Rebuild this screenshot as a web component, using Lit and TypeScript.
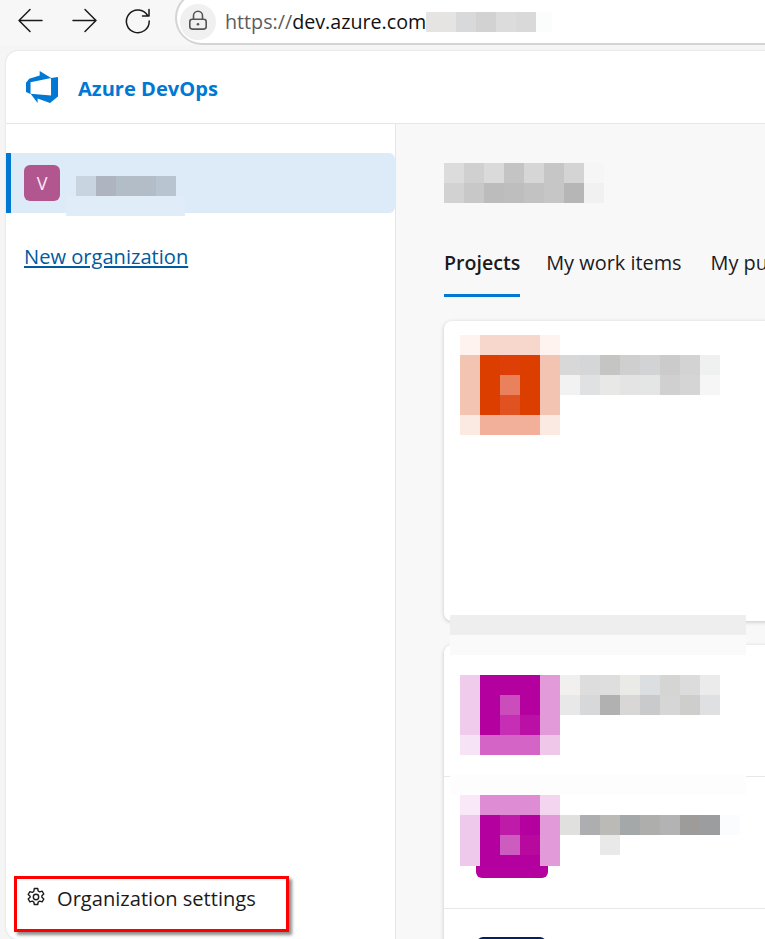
import { LitElement, html, css, svg } from "lit";
import { customElement } from "lit/decorators.js";

const tiles = (rows: string[][], cls = "", cols = "") => html`<div class="tiles ${cls}" style="grid-template-columns:${cols || `repeat(${rows[0].length},20px)`}">
  ${rows.flat().map((c) => html`<i style="background:#${c}"></i>`)}
</div>`;

const URL_T = [["e5e4e2","d8d9db","d2d2d2","dcdcdc","d9d9d9","fbfcfc"]];
const URL_COLS = "30px 20px 20px 20px 20px 16px";
const ORG_T = [["c8d4df","aeb5c0","b2bdc8","b2bdc8","b8c4cf"]];
const HEAD_T = [
  ["dcdcdc","d0d0d0","dadada","c4c4c4","d6d6d6","c6c6c6","d4d4d4","f6f6f6"],
  ["d2d2d2","c8c8c8","bcbcbc","bebebe","c2c2c2","c6c6c6","b6b6b6","f1f1f1"],
];
const ICON1 = [
  ["fff3ef","f7d7cc","f7d7cc","f7d7cc","fff3ef"],
  ["f4c4b2","dc3e00","dd3f06","dc3e00","f4c4b2"],
  ["f4c4b2","dc3e00","e9825c","dc3e00","f4c4b2"],
  ["f4c4b2","dc3e00","e0521f","dc3e00","f4c4b2"],
  ["faeae2","f2b09a","f2b09a","f2b09a","faeae2"],
];
const TEXT1 = [
  ["d8d8d8","d5d6d8","c5c5c3","cfcfcf","d2d3d5","cbcbcb","d3d3d3","eff0f0"],
  ["f2f2f2","dfe1e3","e8e8e6","e4e4e4","e4e6e5","d0d0d0","d5d5d5","f6f6f6"],
];
const ICON2 = [
  ["f0cbec","b4009e","b4009e","b4009e","e29ad9"],
  ["f0cbec","b4009e","cb4dbb","b4009e","e29ad9"],
  ["f0cbec","b4009e","c62fb5","ba10a6","e29ad9"],
  ["f6e3f5","d465c6","d465c6","d465c6","efc7e9"],
];
const TEXT2 = [
  ["f1f0ee","dddddd","dedede","eaeae6","dbdfe2","d5d5d3","dcdcdc","ebebeb"],
  ["e8e8e8","d7d8da","b1b1b1","d8d7d5","c8cacc","d6d6d6","cececc","dfe0e2"],
];
const ICON3 = [
  ["f8e8f8","de8cd4","de8cd4","de8cd4","f3d5ef"],
  ["efc9eb","b4009e","be1ba9","b4009e","e29ad9"],
  ["efc9eb","b4009e","cd5cc0","b8099f","e29ad9"],
  ["efc9eb","b4009e","b4009e","b4009e","e29ad9"],
];
const TEXT3 = [
  ["e0e0de","adaeb0","bbbab6","a5a8a9","aeaeac","b3b3b3","9e9c9a","9c9d9f","fbfcfe"],
  ["ffffff","ffffff","e9e9e9","ffffff","ffffff","ffffff","ffffff","ffffff","ffffff"],
];

const backIcon = svg`<path d="M42 20.5H19M30 9.5 19 20.5 30 31.5"/>`;
const fwdIcon = svg`<path d="M1 11.5H24M13 .5 24 11.5 13 22.5"/>`;

@customElement("app-root")
export class AppRoot extends LitElement {
  static styles = css`
    :host { display: block; width: 765px; height: 939px; overflow: hidden; background: #f5f5f5;
      font-family: "Open Sans", "Noto Sans", sans-serif; color: #1b1b1b; }
    .tiles { display: grid; grid-auto-rows: 20px; }
    .tiles i { display: block; }
    .tiles.short { grid-template-rows: 20px 20px 20px 11px; }

    .toolbar { height: 45px; display: flex; overflow: hidden; background: #f7f7f7; }
    .nav { flex: none; display: block; }
    .nav path { fill: none; stroke: #1a1a1a; stroke-width: 1.5; stroke-linecap: round; stroke-linejoin: round; }
    .pill { flex: none; width: 640px; height: 54px; margin: -9px 0 0 0; box-sizing: border-box; background: #fff;
      border: 2px solid #d4d4d4; border-radius: 27px 0 0 27px; display: flex; align-items: center; padding: 7px 0 0 3px; }
    .lock { flex: none; width: 36px; height: 36px; border-radius: 50%; background: #f0f0f0; display: flex; align-items: center; justify-content: center; }
    .url { margin-left: 9px; font-size: 19.7px; color: #111; white-space: nowrap; line-height: 24px; }
    .url span { color: #5c5c5c; }
    .pill .tiles { margin-top: 1px; }

    .window { margin: 6px -20px 0 6px; height: 888px; background: #fff; border-radius: 12px 0 0 12px;
      box-shadow: 0 0 2px rgba(0,0,0,.16); display: flex; flex-direction: column; }
    .brand { flex: none; height: 73px; box-sizing: border-box; border-bottom: 1px solid #e6e6e6; display: flex; align-items: center; padding-left: 18px; }
    .brand svg { display: block; }
    .brand b { margin: 2px 0 0 18px; font-size: 20.1px; font-weight: 700; color: #0078d4; }
    .body { flex: 1; display: flex; min-height: 0; }

    .side { flex: none; width: 390px; box-sizing: border-box; border-right: 1px solid #e6e6e6; padding-top: 29px; display: flex; flex-direction: column; position: relative; }
    .org { height: 60px; background: #ddebf8; border-left: 5px solid #0078d4; border-radius: 0 6px 6px 0; box-sizing: border-box;
      display: flex; align-items: flex-start; padding: 12px 0 0 13px; position: relative; }
    .avatar { width: 36px; height: 36px; border-radius: 6px; background: #b1568f; color: #fbe8f3; font-size: 18px; display: flex; align-items: center; justify-content: center; }
    .org .tiles { margin: 11px 0 0 16px; }
    .veil { position: absolute; left: 55px; top: 43px; width: 119px; height: 20px; background: #e0edf9; }
    .new { margin: 30px 0 0 18px; font-size: 20.1px; line-height: 28px; color: #005a9e; text-decoration: underline; align-self: flex-start; }
    .settings { margin: auto 0 7px 8px; width: 275px; height: 56px; box-sizing: border-box; border: 3px solid #f00; box-shadow: 3px 3px 3px rgba(0,0,0,.45);
      display: flex; align-items: flex-start; padding: 6px 0 0 10px; font-size: 20.1px; color: #1b1b1b; line-height: 28px; }
    .settings svg { flex: none; margin: 2px 11px 0 -1px; }

    .main { flex: 1; min-width: 0; background: #f8f8f8; padding: 39px 0 0 48px; position: relative; }
    .tabs { display: flex; margin-top: 44px; font-size: 19.9px; line-height: 32px; height: 50px; }
    .tab { white-space: nowrap; box-sizing: border-box; margin-right: 29px; }
    .tab.on { font-weight: 600; font-size: 19.6px; border-bottom: 3px solid #0078d4; color: #1b1b1b; margin-right: 26px; }
    .card { background: #fff; border-radius: 8px 0 0 8px; box-shadow: 0 1px 4px rgba(0,0,0,.2); }
    .c1 { margin-top: 24px; height: 300px; box-sizing: border-box; padding: 14px 0 0 16px; }
    .c2 { margin-top: 24px; }
    .row { display: flex; align-items: flex-start; padding-left: 16px; box-sizing: border-box; }
    .c1 .row { padding-left: 0; }
    .row + .row { border-top: 1px solid #e8e8e8; }
    .r1 { height: 131px; padding-top: 30px; }
    .r2 { height: 132px; padding-top: 18px; }
    .r3 { height: 60px; padding-top: 28px; }
    .text { margin-top: 20px; }
    .r1 .text { margin-top: 0; }
    .foot { width: 72px; height: 12px; margin-left: 16px; background: #b4009e; border-radius: 0 0 6px 6px; }
    .navy { width: 69px; height: 12px; margin-left: 17px; background: #05215c; border-radius: 6px 6px 0 0; }
    .blur { position: absolute; left: 54px; width: 296px; height: 20px; }
    .b1 { top: 491px; background: #eeeeee; }
    .b2 { top: 511px; background: #fafafa; }
    .b3 { top: 651px; background: #fdfdfd; }
  `;

  render() {
    return html`
      <div class="toolbar">
        <svg class="nav" width="175" height="45" viewBox="0 0 175 45">
          ${backIcon}
          <g transform="translate(72 9)">${fwdIcon}</g>
          <path d="M147.6 15.5A11.4 11.4 0 1 0 149.2 21M149 9.500V16H142.500"/>
        </svg>
        <div class="pill">
          <div class="lock">
            <svg width="22" height="26" viewBox="0 0 22 26">
              <path d="M6.500 10V6.800a4.500 4.500 0 0 1 9 0V10" fill="none" stroke="#555" stroke-width="1.6"/>
              <rect x="2.800" y="10.300" width="16.400" height="9.800" rx="2.500" fill="none" stroke="#555" stroke-width="1.600"/>
              <circle cx="11" cy="15.200" r="1.300" fill="#555"/>
            </svg>
          </div>
          <div class="url"><span>https://</span>dev.azure.com</div>
          ${tiles(URL_T, "", URL_COLS)}
        </div>
      </div>
      <div class="window">
        <div class="brand">
          <svg width="36" height="36" viewBox="0 0 18 18"><path fill="#0078d4" d="M17 4v9.740l-4 3.280-6.200-2.260V17l-3.510-4.590 10.230.8V4.440zm-3.410.49L7.850 1v2.290L2.580 4.840 1 6.870v4.610l2.260 1V6.570z"/></svg>
          <b>Azure DevOps</b>
        </div>
        <div class="body">
          <aside class="side">
            <div class="org">
              <div class="avatar">V</div>
              ${tiles(ORG_T)}
              <div class="veil"></div>
            </div>
            <a class="new">New organization</a>
            <div class="settings">
              <svg width="20" height="20" viewBox="0 0 20 20" fill="none" stroke="#1b1b1b" stroke-width="1.400" stroke-linejoin="round">
                <path d="M8.300 1.500h3.400l.5 2.500 1.500.9 2.400-.8 1.700 2.900-1.900 1.700v1.600l1.900 1.700-1.700 2.900-2.400-.8-1.500.9-.5 2.500H8.300l-.5-2.500-1.500-.9-2.400.8-1.700-2.900 1.900-1.700V9.200L2.200 7.500l1.700-2.900 2.400.8 1.500-.9z"/>
                <circle cx="10" cy="10" r="2.700"/>
              </svg>
              Organization settings
            </div>
          </aside>
          <main class="main">
            ${tiles(HEAD_T)}
            <div class="tabs">
              <div class="tab on">Projects</div>
              <div class="tab">My work items</div>
              <div class="tab">My pull requests</div>
            </div>
            <section class="card c1">
              <div class="row">${tiles(ICON1)}<div class="text">${tiles(TEXT1)}</div></div>
            </section>
            <section class="card c2">
              <div class="row r1">${tiles(ICON2)}<div class="text">${tiles(TEXT2)}</div></div>
              <div class="row r2">
                <div>${tiles(ICON3, "short")}<div class="foot"></div></div>
                <div class="text">${tiles(TEXT3)}</div>
              </div>
              <div class="row r3"><div class="navy"></div></div>
            </section>
            <div class="blur b1"></div>
            <div class="blur b2"></div>
            <div class="blur b3"></div>
          </main>
        </div>
      </div>
    `;
  }
}
